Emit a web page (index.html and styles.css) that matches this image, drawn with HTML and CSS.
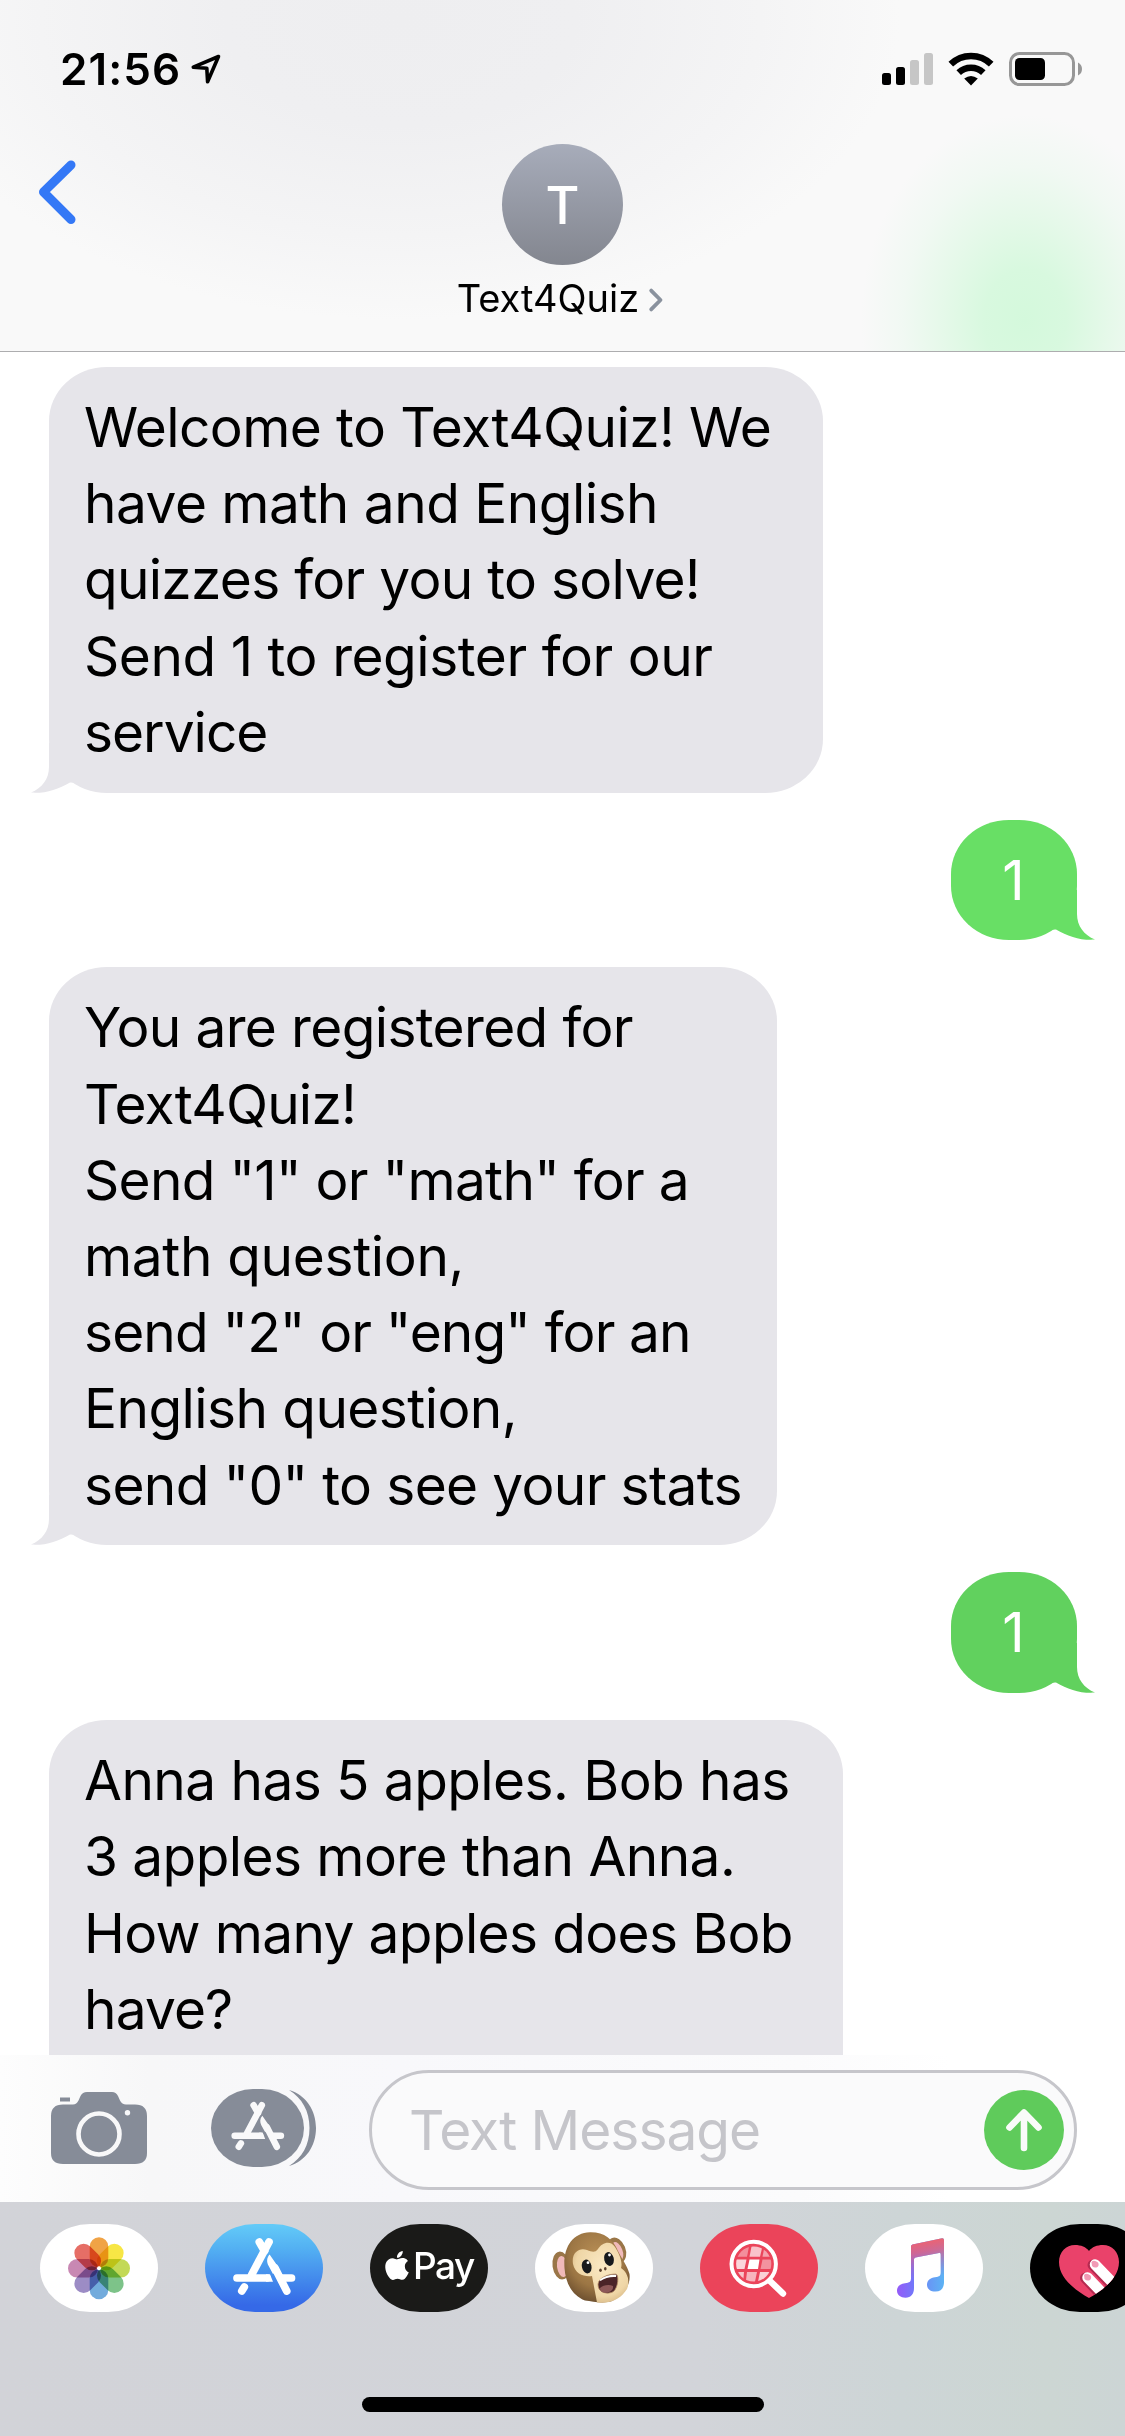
FILE: index.html
```html
<!DOCTYPE html>
<html lang="en">
<head>
<meta charset="utf-8">
<title>Text4Quiz</title>
<link rel="stylesheet" href="styles.css">
</head>
<body>
<svg class="defs" width="0" height="0" aria-hidden="true">
  <symbol id="store-glyph" viewBox="28 13 63 59">
    <g fill="none" stroke="currentColor" stroke-width="7.7" stroke-linecap="round">
      <path d="M64 18 46.5 51"/>
      <path d="M54.3 18 59.5 27"/>
      <path d="M32 54H62"/>
      <path d="M76 54H86.5"/>
      <path d="M39.3 63 36.8 67"/>
      <path d="M70 44 81.7 67"/>
    </g>
    <path fill="currentColor" d="M61 50.2H65L68 57.8H61ZM64.6 30.5C61.5 34 61.6 38 63.4 41.5L68 50 74 44Z"/>
  </symbol>
  <symbol id="tail" viewBox="0 0 60 60">
    <path fill="currentColor" d="M18 10V34C18 46 11 55 0 59.6 14 60.6 27 56.5 39 49.4L50 50V10Z"/>
  </symbol>
</svg>
<div class="phone">
  <header class="header">
    <div class="status">
      <div class="clock">
        <span class="time">21:56</span>
        <svg class="location" viewBox="0 0 30 30"><path d="M27.5 2.5 2.3 13.2 15.8 14.2 16.6 27.8Z" fill="none" stroke="#000" stroke-width="3.6" stroke-linejoin="round"/></svg>
      </div>
      <div class="indicators">
        <svg class="signal" viewBox="0 0 52 34"><g><rect x="0" y="21" width="9" height="12" rx="2.5"/><rect x="14" y="15" width="9" height="18" rx="2.5"/></g><g fill="#c6c6c6"><rect x="28" y="8" width="9" height="25" rx="2.5"/><rect x="42" y="1" width="9" height="32" rx="2.5"/></g></svg>
        <svg class="wifi" viewBox="0 0 46 34"><g fill="none" stroke="#000" stroke-width="6.6"><path d="M2.8 12.2a29 29 0 0 1 40.4 0"/><path d="M10.7 20.6a18 18 0 0 1 24.6 0"/></g><path d="M23 33.4 16.2 26.6q6.8-5.4 13.6 0Z"/></svg>
        <svg class="battery" viewBox="0 0 74 34"><rect x="1.5" y="1.5" width="63" height="31" rx="9" fill="none" stroke="#979797" stroke-width="3"/><rect x="6" y="6" width="30" height="22" rx="4.5"/><path d="M69 10.5q4 2 4 6.5t-4 6.5Z" fill="#979797"/></svg>
      </div>
    </div>
    <div class="nav">
      <svg class="back" viewBox="0 0 38 64"><path d="M33 5 5.5 32 33 59.5" fill="none" stroke="#3478f6" stroke-width="9" stroke-linecap="round" stroke-linejoin="round"/></svg>
      <div class="contact">
        <div class="avatar">T</div>
        <div class="name"><span>Text4Quiz</span><svg class="more" viewBox="0 0 14 24"><path d="M2.2 2.6 11.5 12 2.2 21.4" fill="none" stroke="#8a929e" stroke-width="3.8" stroke-linecap="round" stroke-linejoin="round"/></svg></div>
      </div>
    </div>
  </header>

  <main class="thread">
    <div class="bubble received welcome">
      <p class="line">Welcome to Text4Quiz! We</p>
      <p class="line">have math and English</p>
      <p class="line">quizzes for you to solve!</p>
      <p class="line">Send 1 to register for our</p>
      <p class="line">service</p>
      <svg class="tail"><use href="#tail"/></svg>
    </div>
    <div class="bubble sent"><p class="line">1</p><svg class="tail"><use href="#tail"/></svg></div>
    <div class="bubble received menu">
      <p class="line">You are registered for</p>
      <p class="line">Text4Quiz!</p>
      <p class="line">Send "1" or "math" for a</p>
      <p class="line">math question,</p>
      <p class="line">send "2" or "eng" for an</p>
      <p class="line">English question,</p>
      <p class="line">send "0" to see your stats</p>
      <svg class="tail"><use href="#tail"/></svg>
    </div>
    <div class="bubble sent later"><p class="line">1</p><svg class="tail"><use href="#tail"/></svg></div>
    <div class="bubble received question">
      <p class="line">Anna has 5 apples. Bob has</p>
      <p class="line">3 apples more than Anna.</p>
      <p class="line">How many apples does Bob</p>
      <p class="line">have?</p>
      <p class="line">&nbsp;</p>
    </div>
  </main>

  <section class="composer">
    <svg class="camera" viewBox="0 0 96 73">
      <path fill="#868c98" d="M9 5.5h10v4H9ZM12 12.5H22Q25.500 12.500 27.500 8.500L29.500 4Q31.500 0 36 0H61Q65 0 67 4L69 8.500Q71 12.500 75 12.500H84Q96 12.500 96 24V61Q96 72 84 72H12Q0 72 0 61V24Q0 12.500 12 12.500Z"/>
      <circle cx="48" cy="42" r="20.500" fill="none" stroke="#f8f8f9" stroke-width="4.600"/>
      <circle cx="76.500" cy="20.700" r="2.700" fill="#f8f8f9"/>
    </svg>
    <div class="apps">
      <div class="apps-face"><svg class="apps-glyph"><use href="#store-glyph"/></svg></div>
      <svg class="apps-edge" viewBox="0 0 28 76"><path fill="#868c98" d="M0 0C17 5 27 20 27 38S17 71 0 76C13 68 20.500 55 20.500 38S13 8 0 0Z"/></svg>
    </div>
    <div class="field">
      <span class="placeholder">Text Message</span>
      <div class="send"><svg class="arrow" viewBox="0 0 36 44"><path d="M18 40V5M3.500 19.500 18 4.500 32.500 19.500" fill="none" stroke="#f9fbf9" stroke-width="6.600" stroke-linecap="round" stroke-linejoin="round"/></svg></div>
    </div>
  </section>

  <footer class="dock">
    <div class="drawer">
      <div class="app photos">
        <svg viewBox="0 0 118 88">
          <g class="petals" transform="translate(59 44.300)">
            <rect class="petal" x="-9.300" y="-31" width="18.600" height="30" rx="9.300" fill="#f0a346"/>
            <rect class="petal" x="-9.300" y="-31" width="18.600" height="30" rx="9.300" fill="#f7e645" transform="rotate(45)"/>
            <rect class="petal" x="-9.300" y="-31" width="18.600" height="30" rx="9.300" fill="#c3d956" transform="rotate(90)"/>
            <rect class="petal" x="-9.300" y="-31" width="18.600" height="30" rx="9.300" fill="#7dc389" transform="rotate(135)"/>
            <rect class="petal" x="-9.300" y="-31" width="18.600" height="30" rx="9.300" fill="#72abdc" transform="rotate(180)"/>
            <rect class="petal" x="-9.300" y="-31" width="18.600" height="30" rx="9.300" fill="#9c8cc5" transform="rotate(225)"/>
            <rect class="petal" x="-9.300" y="-31" width="18.600" height="30" rx="9.300" fill="#c888b3" transform="rotate(270)"/>
            <rect class="petal" x="-9.300" y="-31" width="18.600" height="30" rx="9.300" fill="#e66e66" transform="rotate(315)"/>
          </g>
          <circle cx="59" cy="44.300" r="2" fill="#fff"/>
        </svg>
      </div>
      <div class="app store"><svg class="store-icon"><use href="#store-glyph"/></svg></div>
      <div class="app pay">
        <svg class="apple" viewBox="2 0 20 24"><path fill="#fff" d="M12.152 6.896c-.948 0-2.415-1.078-3.960-1.040-2.040.027-3.910 1.183-4.961 3.014-2.117 3.675-.546 9.103 1.519 12.090 1.013 1.454 2.208 3.090 3.792 3.039 1.520-.065 2.090-.987 3.935-.987 1.831 0 2.350.987 3.960.948 1.637-.026 2.676-1.480 3.676-2.948 1.156-1.688 1.636-3.325 1.662-3.415-.039-.013-3.182-1.221-3.220-4.857-.026-3.040 2.480-4.494 2.597-4.559-1.429-2.090-3.623-2.324-4.390-2.376-2-.156-3.675 1.090-4.610 1.090zM15.530 3.830c.843-1.012 1.400-2.427 1.245-3.830-1.207.052-2.662.805-3.532 1.818-.780.896-1.454 2.338-1.273 3.714 1.338.104 2.715-.688 3.559-1.701"/></svg>
        <span>Pay</span>
      </div>
      <div class="app monkey">
        <svg viewBox="0 0 118 88">
          <defs>
            <radialGradient id="fur" cx=".5" cy=".35" r=".65"><stop offset="0" stop-color="#b98f56"/><stop offset=".65" stop-color="#9c7644"/><stop offset="1" stop-color="#6f5130"/></radialGradient>
            <radialGradient id="skin" cx=".55" cy=".4" r=".7"><stop offset="0" stop-color="#fbe9c4"/><stop offset=".7" stop-color="#efd6a6"/><stop offset="1" stop-color="#cfae7b"/></radialGradient>
          </defs>
          <ellipse cx="26" cy="41.500" rx="8.500" ry="14" fill="#9a7648" transform="rotate(-8 26 41.500)"/>
          <ellipse cx="27.500" cy="42.500" rx="5.500" ry="10.500" fill="#f0b9b9" transform="rotate(-8 27.500 42.500)"/>
          <ellipse cx="82" cy="26" rx="8.500" ry="13" fill="#9a7648" transform="rotate(-22 82 26)"/>
          <ellipse cx="82.500" cy="27" rx="5" ry="9.500" fill="#f0b9b9" transform="rotate(-22 82.500 27)"/>
          <path fill="url(#fur)" d="M29.500 44C28 24 37 9 55 8.300 69 8 78 15 83 27 87 35 92 41 94.500 50 96 62 87 72 77 77 68 80 58 77.500 50 76.500 38 72 30.500 60 29.500 44Z"/>
          <path fill="url(#skin)" d="M38 40C36 28 45 23 52 26 57 28 60 29 63 25 67 18 76 16 80 23 84 29 88 38 86 44 92 48 95.500 56 92 65 87 73 79 78 71 78.500 66 79 62 78.500 62 78.500L57 52C49 53 40 50 38 40Z"/>
          <ellipse cx="51.700" cy="42.500" rx="4.800" ry="7" fill="#17191c" transform="rotate(-12 51.700 42.500)"/>
          <ellipse cx="74" cy="35" rx="4.800" ry="7" fill="#17191c" transform="rotate(-14 74 35)"/>
          <circle cx="53" cy="38.700" r="1.400" fill="#fff"/><circle cx="74.500" cy="31" r="1.400" fill="#fff"/>
          <ellipse cx="65.500" cy="46.300" rx="1.300" ry="1.800" fill="#5d422d"/><ellipse cx="70.300" cy="44.800" rx="1.300" ry="1.800" fill="#5d422d"/>
          <path fill="#4b2428" stroke="#b78f66" stroke-width=".8" d="M63 60C64 53 74 50 81 50 84 51 83.500 63 78.500 67.500 73 71 62.500 69 63 60Z"/>
          <path fill="#8d5757" d="M65 64C68 61 74 60 78 62 79 67 73 69.500 69 68.500 66 68 65 66.500 65 64Z"/>
          <path fill="#fff" d="M64.500 55.800C69 52 75 50.500 81.300 50.800L81 53C75 52.500 70 54 65.500 57Z"/>
        </svg>
      </div>
      <div class="app images">
        <svg viewBox="0 0 118 88">
          <clipPath id="ball"><circle cx="53.700" cy="40" r="17.600"/></clipPath>
          <circle cx="53.700" cy="40" r="22.200" fill="none" stroke="#fff" stroke-width="4"/>
          <path d="M70 57 83 69.500" stroke="#fff" stroke-width="6.400" stroke-linecap="round"/>
          <g clip-path="url(#ball)" fill="#fff">
            <path opacity=".4" d="M34 20H49.500L47 32.700H34Z"/><path opacity=".68" d="M52 20H63L60 32.700H49.500Z"/><path opacity=".5" d="M65 20H74V32.700H62.500Z"/>
            <path opacity=".78" d="M34 35.500H46.500L44.500 45H34Z"/><path d="M49.500 35.500H59.500L58 45H47.500Z"/><path opacity=".42" d="M62.500 35.500H74V45H60.500Z"/>
            <path opacity=".68" d="M34 48H44L43 60H34Z"/><path opacity=".6" d="M47 48H57L54.500 60H45.500Z"/><path opacity=".75" d="M60 48H74V60H57.500Z"/>
          </g>
        </svg>
      </div>
      <div class="app music">
        <svg viewBox="0 0 118 88">
          <defs>
            <linearGradient id="tune-base" x1="0" y1="0" x2="1" y2="0"><stop offset="0" stop-color="#955bf8"/><stop offset=".35" stop-color="#7377fa"/><stop offset=".7" stop-color="#6799f5"/><stop offset="1" stop-color="#5cb3f4"/></linearGradient>
            <linearGradient id="tune-top" x1=".35" y1="0" x2=".48" y2="1"><stop offset="0" stop-color="#fa5f62"/><stop offset=".25" stop-color="#d9648a" stop-opacity=".9"/><stop offset=".7" stop-color="#a862c8" stop-opacity="0"/></linearGradient>
            <path id="tune" d="M46 22.500Q46 21 47.500 20.600L77 14.300Q79 14 79 16V58C79 64 76 67.600 70.500 67.600 65 67.600 62 64.500 62 61 62 56 65.500 54 70 53.300 74.500 52.600 75.700 52 75.700 48V30.500Q75.700 28.500 74 28.900L50.500 33.500Q49 33.800 49 35.500V64C49 70 46 73.700 40.500 73.700 35.500 73.700 32 71 32 66.800 32 62 35.500 60 40 59.300 44.500 58.600 46 58 46 54Z"/>
          </defs>
          <use href="#tune" fill="url(#tune-base)"/><use href="#tune" fill="url(#tune-top)"/>
        </svg>
      </div>
      <div class="app touch">
        <svg viewBox="0 0 118 88">
          <clipPath id="heart"><path d="M59 74C45 66 29 54 29 38 29 28 36 21 45 21 51 21 56 23 59 27 62 23 67 21 73 21 82 21 89 28 89 38 89 54 73 66 59 74Z"/></clipPath>
          <g clip-path="url(#heart)">
            <rect x="25" y="18" width="70" height="60" fill="#ea426a"/>
            <path d="M63 41 90 69M55.500 54 80 80" stroke="#b52a50" stroke-width="11" stroke-linecap="round"/>
            <path d="M65 40.500 92 68.500M57.500 53.500 82 79" stroke="#fff" stroke-width="10.500" stroke-linecap="round"/>
            <path d="M61.500 38Q64 35.500 68 38.500 69.500 41 67.500 43 64.500 44.500 62 42ZM54 51Q56.500 48.500 60.500 51.500 62 54 60 56 57 57.500 54.500 55Z" fill="#f19ab5"/>
          </g>
        </svg>
      </div>
    </div>
    <div class="home"></div>
  </footer>
</div>
</body>
</html>
```
FILE: styles.css
```css
* { box-sizing: border-box; }
body {
  margin: 0;
  font-family: Inter, "Liberation Sans", sans-serif;
  color: #000;
  background: #fff;
}
svg { display: block; overflow: visible; flex: none; }
p { margin: 0; }
.defs { position: absolute; }

.phone {
  width: 1125px;
  height: 2436px;
  display: flex;
  flex-direction: column;
  overflow: hidden;
}

/* header */
.header {
  height: 352px;
  flex: none;
  border-bottom: 1px solid #adadaf;
  background:
    radial-gradient(ellipse 164px 205px at 1025px 320px, #d4f9dc 0%, #d8f9df 25%, #e5f9e9 50%, #f1f9f3 75%, rgba(249,249,249,0) 100%),
    radial-gradient(ellipse 500px 300px at 400px 20px, #eeeef0 0%, #efeff1 35%, #f4f4f5 72%, #f9f9f9 100%);
}
.status {
  height: 144px;
  padding: 0 42px 0 60px;
  display: flex;
  justify-content: space-between;
}
.clock { display: flex; padding-top: 41px; gap: 11px; }
.time {
  width: 120px;
  font-size: 44px;
  font-weight: 600;
  line-height: 56px;
  letter-spacing: 1.1px;
  white-space: nowrap;
}
.location { width: 30px; height: 30px; margin-top: 13px; }
.indicators { display: flex; padding-top: 52px; }
.signal { width: 52px; height: 34px; margin-right: 14px; }
.wifi { width: 46px; height: 34px; margin-right: 15px; }
.battery { width: 74px; height: 34px; }

.nav {
  display: grid;
  grid-template-columns: 120px 1fr 120px;
  align-items: start;
}
.back { width: 38px; height: 64px; margin: 16px 0 0 38px; }
.contact { display: flex; flex-direction: column; align-items: center; }
.avatar {
  width: 121px;
  height: 121px;
  border-radius: 50%;
  background: linear-gradient(#a7acba, #83868f);
  color: #fff;
  font-size: 52px;
  font-weight: 500;
  line-height: 124px;
  text-align: center;
}
.name {
  display: flex;
  align-items: center;
  gap: 10px;
  margin-top: 9px;
  margin-right: 5px;
  font-size: 38px;
  line-height: 48px;
}
.more { width: 14px; height: 24px; margin-top: 4px; }

/* thread */
.thread {
  height: 1703px;
  flex: none;
  padding: 15px 48px 0 49px;
  display: flex;
  flex-direction: column;
  align-items: flex-start;
  gap: 27px;
  overflow: hidden;
}
.bubble {
  position: relative;
  flex: none;
  padding: 22px 37px 22.600px 35px;
  border-radius: 58px / 54px;
  font-size: 55px;
  line-height: 76.200px;
}
.line { white-space: nowrap; letter-spacing: -0.65px; }
.received { background: #e6e5ea; color: #e6e5ea; }
.received .line { color: #000; }
.welcome { width: 774px; }
.menu { width: 728px; }
.question { width: 794px; }

.welcome .line:nth-child(1) { letter-spacing: -0.6px; }
.welcome .line:nth-child(2) { letter-spacing: -0.52px; }
.welcome .line:nth-child(3) { letter-spacing: -0.72px; }
.welcome .line:nth-child(4) { letter-spacing: -0.46px; }
.welcome .line:nth-child(5) { letter-spacing: -1px; }
.menu .line:nth-child(2) { letter-spacing: -0.8px; }
.menu .line:nth-child(3) { letter-spacing: -0.72px; }
.menu .line:nth-child(4) { letter-spacing: -0.35px; }
.menu .line:nth-child(5) { letter-spacing: -0.87px; }
.menu .line:nth-child(6) { letter-spacing: -0.58px; }
.question .line:nth-child(1) { letter-spacing: -0.57px; }
.question .line:nth-child(2) { letter-spacing: -0.58px; }
.question .line:nth-child(4) { letter-spacing: -0.85px; }

.sent {
  align-self: flex-end;
  width: 126px;
  padding-left: 0;
  padding-right: 2px;
  text-align: center;
  background: #68df65;
  color: #68df65;
}
.sent.later { background: #61d15e; color: #61d15e; }
.sent .line { color: #fff; }
.tail { position: absolute; left: -18px; bottom: 0; width: 60px; height: 60px; }
.sent .tail { left: auto; right: -18px; transform: scaleX(-1); }

/* composer */
.composer {
  height: 147px;
  flex: none;
  padding: 15px 48px 0 51px;
  display: flex;
  align-items: flex-start;
  background: linear-gradient(90deg, #fdfdfd 0, #f7f7f8 150px, #f8f8fb 400px, #fbfbfc 800px, #fff 950px);
}
.camera { width: 96px; height: 73px; margin-top: 22px; }
.apps { display: flex; margin: 19px 0 0 64px; width: 158px; }
.apps-face {
  flex: none;
  width: 93px;
  height: 78px;
  border-radius: 42px / 39px;
  background: #868c98;
  color: #f9f9fa;
  padding: 12px 0 0 20px;
}
.apps-glyph { width: 54px; height: 50px; }
.apps-edge { width: 28px; height: 76px; margin: 1px 0 0 -15px; }
.field {
  width: 708px;
  height: 120px;
  flex: none;
  border: 3px solid #c6c6cb;
  border-radius: 60px;
  background: #fafafb;
  display: flex;
  justify-content: space-between;
  align-items: center;
  padding: 0 10px 0 37px;
}
.placeholder { font-size: 55px; letter-spacing: -1px; color: #c5c5ca; white-space: nowrap; }
.send {
  width: 80px;
  height: 80px;
  border-radius: 50%;
  background: #5fcb5b;
  display: flex;
  align-items: center;
  justify-content: center;
}
.arrow { width: 36px; height: 44px; }

/* app drawer */
.dock {
  height: 234px;
  flex: none;
  padding-top: 22px;
  background: linear-gradient(90deg, #d2d3d8 0, #d2d4d9 700px, #cdd5d6 900px, #ccd6d3 1050px, #ccd5d5 1125px);
  overflow: hidden;
}
.drawer { display: flex; gap: 47px; padding-left: 40px; }
.app {
  width: 118px;
  height: 88px;
  flex: none;
  border-radius: 50px / 44px;
  background: #fff;
  overflow: hidden;
}
.petals { isolation: isolate; }
.petal { mix-blend-mode: multiply; }
.store { background: linear-gradient(#63cbf8, #53b0f2 28%, #3569e7 92%); color: #fff; padding: 13px 0 0 28px; }
.store-icon { width: 63px; height: 59px; }
.pay { background: #1a1a18; display: flex; align-items: flex-start; color: #fff; }
.apple { width: 24px; height: 29px; margin: 27px 4px 0 15px; }
.pay span { font-size: 37px; font-weight: 500; line-height: 48px; letter-spacing: -1.500px; padding-top: 18px; }
.images { background: #eb445a; }
.touch { background: #000; }
.home { width: 402px; height: 15px; margin: 85px 0 0 362px; border-radius: 8px; background: #000; }
```
